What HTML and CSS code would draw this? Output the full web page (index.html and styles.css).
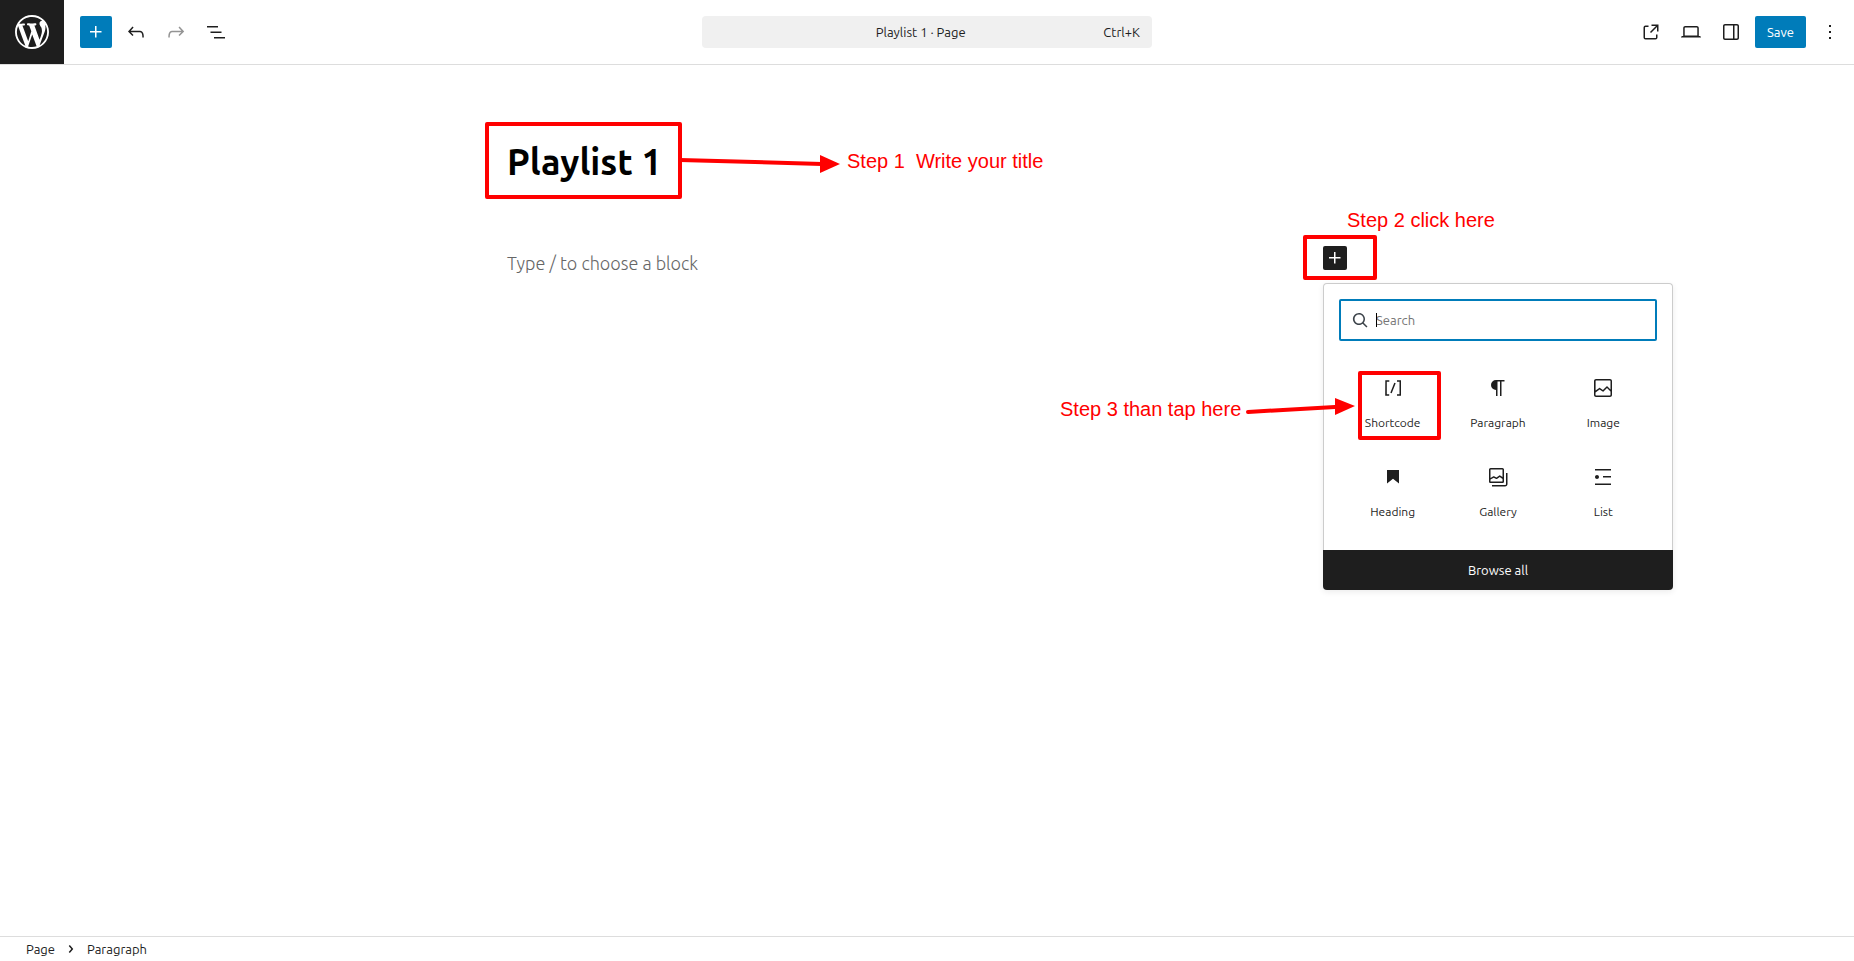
FILE: index.html
```html
<!DOCTYPE html>
<html lang="en">
<head>
	<meta charset="UTF-8">
	<meta name="viewport" content="width=device-width, initial-scale=1.0">
	<title>Edit Page</title>
	<link rel="stylesheet" href="styles.css">
</head>
<body>

	<header class="editor-header">
		<a href="#" class="site-logo" aria-label="View Pages">
			<svg viewBox="0 0 20 20"><path d="M20 10c0-5.51-4.49-10-10-10C4.48 0 0 4.49 0 10c0 5.52 4.48 10 10 10 5.51 0 10-4.48 10-10zM7.78 15.37L4.37 6.22c.55-.02 1.17-.08 1.17-.08.5-.06.44-1.13-.06-1.11 0 0-1.45.11-2.37.11-.18 0-.37 0-.58-.01C4.12 2.69 6.87 1.11 10 1.11c2.33 0 4.45.87 6.05 2.34-.68-.11-1.65.39-1.65 1.58 0 .74.45 1.36.9 2.1.35.61.55 1.36.55 2.46 0 1.49-1.4 5-1.4 5l-3.03-8.37c.54-.02.82-.17.82-.17.5-.05.44-1.25-.06-1.22 0 0-1.44.12-2.38.12-.87 0-2.33-.12-2.33-.12-.5-.03-.56 1.2-.06 1.22l.92.08 1.26 3.41zM17.41 10c.24-.64.74-1.87.43-4.25.7 1.29 1.05 2.71 1.05 4.25 0 3.29-1.73 6.24-4.4 7.78.97-2.59 1.94-5.2 2.92-7.78zM6.1 18.09C3.12 16.65 1.11 13.53 1.11 10c0-1.3.23-2.48.72-3.59C3.25 10.3 4.67 14.2 6.1 18.09zm4.03-6.63l2.58 6.98c-.86.29-1.76.45-2.71.45-.79 0-1.57-.11-2.29-.33.81-2.38 1.62-4.74 2.42-7.1z"/></svg>
		</a>

		<div class="tools">
			<button type="button" class="icon-button primary" aria-label="Block Inserter">
				<svg class="icon" viewBox="0 0 24 24"><path d="M11 12.5V17.5H12.5V12.5H17.5V11H12.5V6H11V11H6V12.5H11Z"/></svg>
			</button>
			<button type="button" class="icon-button" aria-label="Undo">
				<svg class="icon" viewBox="0 0 24 24"><path d="M18.3 11.7c-.6-.6-1.4-.9-2.3-.9H6.7l2.9-3.3-1.1-1-4.5 5L8.5 16l1-1-2.7-2.7H16c.5 0 .9.2 1.3.5 1 1 1 3.4 1 4.5v.3h1.5v-.2c0-1.5 0-4.3-1.5-5.7z"/></svg>
			</button>
			<button type="button" class="icon-button" aria-label="Redo" disabled>
				<svg class="icon" viewBox="0 0 24 24"><path d="M15.6 6.5l-1.1 1 2.9 3.3H8c-.9 0-1.7.3-2.3.9-1.4 1.5-1.4 4.2-1.4 5.6v.2h1.5v-.3c0-1.1 0-3.5 1-4.5.3-.3.7-.5 1.3-.5h9.2L14.5 15l1.1 1.1 4.6-4.6-4.6-5z"/></svg>
			</button>
			<button type="button" class="icon-button" aria-label="Document Overview">
				<svg class="icon" viewBox="0 0 24 24"><path d="M3 6h11v1.5H3V6Zm3.5 5.5h11V13h-11v-1.5ZM21 17H10v1.5h11V17Z"/></svg>
			</button>
		</div>

		<button type="button" class="document-bar">
			<span class="document-title">Playlist 1 · Page</span>
			<span>Ctrl+K</span>
		</button>

		<div class="settings">
			<a href="#" class="icon-button" aria-label="View Page">
				<svg class="icon" viewBox="0 0 24 24"><path d="M19.5 4.5h-7V6h4.44l-5.97 5.97 1.06 1.06L18 7.06v4.44h1.5v-7Zm-13 1a2 2 0 0 0-2 2v10a2 2 0 0 0 2 2h10a2 2 0 0 0 2-2v-3H17v3a.5.5 0 0 1-.5.5h-10a.5.5 0 0 1-.5-.5v-10a.5.5 0 0 1 .5-.5h3V5.5h-3Z"/></svg>
			</a>
			<button type="button" class="icon-button" aria-label="View">
				<svg class="icon" viewBox="0 0 24 24"><path d="M20.5 16h-.7V8c0-1.1-.9-2-2-2H6.2c-1.1 0-2 .9-2 2v8h-.7c-.8 0-1.5.7-1.5 1.5h20c0-.8-.7-1.5-1.5-1.5zM5.7 8c0-.3.2-.5.5-.5h11.6c.3 0 .5.2.5.5v7.6H5.7V8z"/></svg>
			</button>
			<button type="button" class="icon-button" aria-label="Settings">
				<svg class="icon" viewBox="0 0 24 24"><path d="M18 4H6c-1.1 0-2 .9-2 2v12c0 1.1.9 2 2 2h12c1.1 0 2-.9 2-2V6c0-1.1-.9-2-2-2zm-4 14.5H6c-.3 0-.5-.2-.5-.5V6c0-.3.2-.5.5-.5h8v13zm4.5-.5c0 .3-.2.5-.5.5h-2.5v-13H18c.3 0 .5.2.5.5v12z"/></svg>
			</button>
			<button type="button" class="save-button">Save</button>
			<button type="button" class="icon-button" aria-label="Options">
				<svg class="icon" viewBox="0 0 24 24"><path d="M13 19h-2v-2h2v2zm0-6h-2v-2h2v2zm0-6h-2V5h2v2z"/></svg>
			</button>
		</div>
	</header>

	<main class="canvas">
		<div class="content">
			<h1>Playlist 1</h1>

			<div class="empty-block">
				<p>Type / to choose a block</p>
				<div class="appender">
					<button type="button" class="add-block" aria-label="Add block">
						<svg class="icon" viewBox="0 0 24 24"><path d="M11 12.5V17.5H12.5V12.5H17.5V11H12.5V6H11V11H6V12.5H11Z"/></svg>
					</button>

					<div class="inserter">
						<div class="inserter-body">
							<div class="search">
								<label for="search" aria-label="Search">
									<svg class="icon flip" viewBox="0 0 24 24"><path d="M13 5c-3.3 0-6 2.7-6 6 0 1.4.5 2.7 1.3 3.7l-3.8 3.8 1.1 1.1 3.8-3.8c1 .8 2.3 1.3 3.7 1.3 3.3 0 6-2.7 6-6S16.3 5 13 5zm0 10.5c-2.5 0-4.5-2-4.5-4.5s2-4.5 4.5-4.5 4.5 2 4.5 4.5-2 4.5-4.5 4.5z"/></svg>
								</label>
								<span class="caret"></span>
								<input type="text" id="search" placeholder="Search">
							</div>

							<div class="blocks">
								<button type="button" class="block">
									<svg class="icon" viewBox="0 0 24 24"><path d="M16 4.2v1.5h2.5v12.5H16v1.5h4V4.2h-4zM4.2 19.8h4v-1.5H5.8V5.8h2.5V4.2h-4l-.1 15.6zm5.1-3.1l1.4.6 4-10-1.4-.6-4 10z"/></svg>
									<span>Shortcode</span>
								</button>
								<button type="button" class="block">
									<svg class="icon" viewBox="0 0 24 24"><path d="M10 14v6h1.5V5.5H14V20h1.5V5.5h3V4H10a5 5 0 0 0 0 10z"/></svg>
									<span>Paragraph</span>
								</button>
								<button type="button" class="block">
									<svg class="icon" viewBox="0 0 24 24"><path d="M19 3H5c-1.1 0-2 .9-2 2v14c0 1.1.9 2 2 2h14c1.1 0 2-.9 2-2V5c0-1.1-.9-2-2-2zM5 4.5h14c.3 0 .5.2.5.5v8.4l-3-2.9c-.3-.3-.8-.3-1 0L11.9 14 9 12c-.3-.2-.6-.2-.8 0l-3.6 2.6V5c-.1-.3.1-.5.4-.5zm14 15H5c-.3 0-.5-.2-.5-.5v-2.4l4.1-3 3 1.9c.3.2.7.2.9-.1L16 12l3.5 3.4V19c0 .3-.2.5-.5.5z"/></svg>
									<span>Image</span>
								</button>
								<button type="button" class="block">
									<svg class="icon" viewBox="0 0 24 24"><path d="M6 5V18.5911L12 13.8473L18 18.5911V5H6Z"/></svg>
									<span>Heading</span>
								</button>
								<button type="button" class="block">
									<svg class="icon" viewBox="0 0 24 24"><path fill-rule="evenodd" d="M16.375 4.5H4.625a.125.125 0 0 0-.125.125v8.254l2.859-1.54a.75.75 0 0 1 .68-.016l2.384 1.142 2.89-2.074a.75.75 0 0 1 .874 0l2.313 1.66V4.625a.125.125 0 0 0-.125-.125Zm.125 9.398-2.75-1.975-2.813 2.02a.75.75 0 0 1-.76.067l-2.444-1.17L4.5 14.583v1.792c0 .069.056.125.125.125h11.75a.125.125 0 0 0 .125-.125v-2.477ZM4.625 3C3.728 3 3 3.728 3 4.625v11.75C3 17.273 3.728 18 4.625 18h11.75c.898 0 1.625-.727 1.625-1.625V4.625C18 3.728 17.273 3 16.375 3H4.625ZM20 8v11c0 .69-.31 1-.999 1H6v1.5h13.001c1.52 0 2.499-.982 2.499-2.5V8H20Z"/></svg>
									<span>Gallery</span>
								</button>
								<button type="button" class="block">
									<svg class="icon" viewBox="0 0 24 24"><path d="M4 4v1.5h16V4H4zm8 8.5h8V11h-8v1.5zM4 20h16v-1.5H4V20zm4-8c0-1.1-.9-2-2-2s-2 .9-2 2 .9 2 2 2 2-.9 2-2z"/></svg>
									<span>List</span>
								</button>
							</div>
						</div>
						<button type="button" class="browse-all">Browse all</button>
					</div>
				</div>
			</div>

			<!-- tutorial marks drawn over the editor -->
			<div class="mark mark-title"></div>
			<div class="mark mark-add"></div>
			<div class="mark mark-shortcode"></div>
			<svg class="arrow arrow-title" viewBox="0 0 160 20"><path d="M0 6L142 10" stroke="red" stroke-width="4"/><path d="M140 1v18l20-9z" fill="red"/></svg>
			<svg class="arrow arrow-shortcode" viewBox="0 0 110 20"><path d="M3 15L90 10" stroke="red" stroke-width="4" stroke-linecap="round"/><path d="M90 1v17l20-9z" fill="red"/></svg>
			<div class="note note-title">Step 1&nbsp; Write your title</div>
			<div class="note note-add">Step 2 click here</div>
			<div class="note note-shortcode">Step 3 than tap here</div>
		</div>
	</main>

	<footer class="breadcrumb">
		<a href="#">Page</a>
		<svg class="icon" viewBox="0 0 24 24"><path d="M10.8622 8.04053L14.2805 12.0286L10.8622 16.0167L9.72327 15.0405L12.3049 12.0286L9.72327 9.01672L10.8622 8.04053Z"/></svg>
		<a href="#">Paragraph</a>
	</footer>

</body>
</html>
```
FILE: styles.css
```css
* {
	box-sizing: border-box;
}

body {
	margin: 0;
	min-height: 100vh;
	display: flex;
	flex-direction: column;
	background-color: #fff;
	color: #1e1e1e;
	font-family: Ubuntu, "Noto Sans", sans-serif;
	font-size: 13px;
}

button,
input {
	font: inherit;
	color: inherit;
	border: none;
	background: none;
	padding: 0;
}

a {
	color: inherit;
	text-decoration: none;
}

.icon {
	display: block;
	flex: none;
	width: 24px;
	height: 24px;
	fill: currentColor;
}

/* top bar */
.editor-header {
	display: grid;
	grid-template-columns: 64px calc(50% - 289px) minmax(0, 450px) 1fr;
	align-items: center;
	height: 65px;
	border-bottom: 1px solid #ddd;
}

.site-logo {
	display: flex;
	align-items: center;
	justify-content: center;
	width: 64px;
	height: 64px;
	background-color: #1e1e1e;
}

.site-logo svg {
	width: 34px;
	height: 34px;
	fill: #fff;
}

.tools,
.settings {
	display: flex;
	align-items: center;
	gap: 8px;
}

.tools {
	padding-left: 16px;
}

.settings {
	justify-content: flex-end;
	padding-right: 8px;
}

.icon-button {
	display: flex;
	align-items: center;
	justify-content: center;
	width: 32px;
	height: 32px;
	border-radius: 2px;
}

.icon-button:disabled {
	color: #949494;
}

.primary,
.save-button {
	background-color: #007cba;
	color: #fff;
}

.save-button {
	height: 32px;
	padding: 0 12px;
	border-radius: 2px;
}

.document-bar {
	display: flex;
	align-items: center;
	height: 32px;
	padding: 0 12px 0 36px;
	border-radius: 4px;
	background-color: #f0f0f0;
}

.document-title {
	flex: 1;
	text-align: center;
}

/* canvas */
.canvas {
	flex: 1;
}

.content {
	position: relative;
	width: 100%;
	max-width: 840px;
	margin: 0 auto;
	padding-top: 72px;
}

h1 {
	margin: 0;
	color: #000;
	font-size: 36px;
	font-weight: 600;
	line-height: 50px;
}

.empty-block {
	display: flex;
	justify-content: space-between;
	margin-top: 59px;
}

.empty-block p {
	margin: 0;
	color: #666;
	font-size: 18px;
	font-weight: 300;
	line-height: 34px;
}

.appender {
	position: relative;
	width: 24px;
}

.add-block {
	display: block;
	width: 24px;
	height: 24px;
	border-radius: 2px;
	background-color: #1e1e1e;
	color: #fff;
}

/* quick inserter */
.inserter {
	position: absolute;
	top: 37px;
	left: 0;
	width: 350px;
	border-radius: 4px;
	box-shadow: 0 2px 6px rgba(0, 0, 0, 0.08);
}

.inserter-body {
	padding: 15px;
	border: 1px solid #ccc;
	border-bottom: none;
	border-radius: 4px 4px 0 0;
	background-color: #fff;
}

.search {
	position: relative;
	display: flex;
	align-items: center;
	height: 42px;
	padding-left: 7px;
	border: 2px solid #007cba;
	border-radius: 2px;
}

.search label {
	color: #3c434a;
}

.flip {
	transform: scaleX(-1);
}

.search input {
	flex: 1;
	min-width: 0;
	height: 36px;
	padding-left: 4px;
	outline: none;
}

.search input::placeholder {
	color: #757575;
	opacity: 1;
}

.caret {
	position: absolute;
	top: 12px;
	left: 35px;
	width: 1px;
	height: 14px;
	background-color: #000;
}

.blocks {
	display: grid;
	grid-template-columns: repeat(3, 1fr);
	margin: 16px 1px 0;
}

.block {
	display: flex;
	flex-direction: column;
	align-items: center;
	gap: 15px;
	height: 89px;
	padding-top: 19px;
	font-size: 12px;
	line-height: 16px;
}

.browse-all {
	display: block;
	width: 100%;
	height: 40px;
	border-radius: 0 0 4px 4px;
	background-color: #1e1e1e;
	color: #fff;
}

/* tutorial marks */
.mark {
	position: absolute;
	border: 4px solid #f00;
	border-radius: 2px;
}

.mark-title {
	top: 57px;
	left: -22px;
	width: 197px;
	height: 77px;
}

.mark-add {
	top: 170px;
	left: 796px;
	width: 74px;
	height: 45px;
}

.mark-shortcode {
	top: 306px;
	left: 851px;
	width: 83px;
	height: 69px;
}

.arrow {
	position: absolute;
	height: 20px;
}

.arrow-title {
	top: 89px;
	left: 173px;
	width: 160px;
}

.arrow-shortcode {
	top: 332px;
	left: 738px;
	width: 110px;
}

.note {
	position: absolute;
	color: #f00;
	font-family: "Liberation Sans", Arial, sans-serif;
	font-size: 20px;
	line-height: 24px;
	white-space: nowrap;
}

.note-title {
	top: 84px;
	left: 340px;
}

.note-add {
	top: 143px;
	left: 840px;
}

.note-shortcode {
	top: 332px;
	left: 553px;
}

/* bottom bar */
.breadcrumb {
	display: flex;
	align-items: center;
	gap: 4px;
	height: 25px;
	padding-left: 26px;
	border-top: 1px solid #ddd;
}
```
